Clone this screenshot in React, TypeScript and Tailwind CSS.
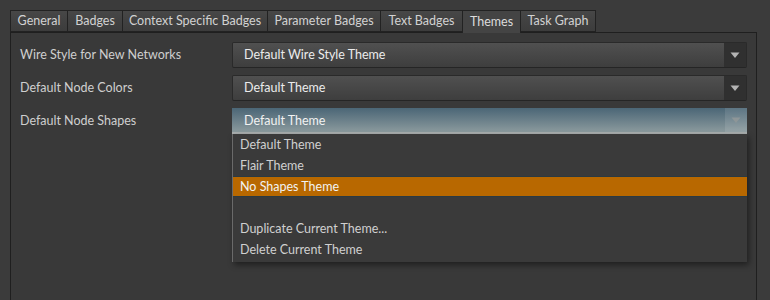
import React from 'react';

const tabs = [
  { label: 'General', w: 'w-[58px]' },
  { label: 'Badges', w: 'w-[56px]' },
  { label: 'Context Specific Badges', w: 'w-[146px]' },
  { label: 'Parameter Badges', w: 'w-[114px]' },
  { label: 'Text Badges', w: 'w-[83px]' },
  { label: 'Themes', w: 'w-[59px]', active: true },
  { label: 'Task Graph', w: 'w-[76px]' },
];

const Arrow: React.FC<{ dim?: boolean }> = ({ dim }) => (
  <svg width="10" height="7" viewBox="0 0 10 7">
    <path d="M0.5 0.5 L9.5 0.5 L5 6 Z" fill={dim ? '#8e9698' : '#b4b4b4'} />
  </svg>
);

const Combo: React.FC<{ value: string; open?: boolean }> = ({ value, open }) =>
  open ? (
    <div className="flex h-[26px] w-[515px] border-b-2 border-[#a9aeae] bg-gradient-to-b from-[#4b6676] to-[#8b9a9d]">
      <div className="flex-1 pl-[12px] leading-[25px] text-[#f2f2f2]">{value}</div>
      <div className="flex w-[22px] items-center justify-center bg-[#ffffff1a]">
        <Arrow dim />
      </div>
    </div>
  ) : (
    <div className="flex h-[26px] w-[515px] rounded-[2px] border border-[#2a2a2a] border-b-[#252525] bg-gradient-to-b from-[#505050] to-[#3e3e3e]">
      <div className="flex-1 pl-[11px] leading-[24px] text-[#ececec]">{value}</div>
      <div className="flex w-[22px] items-center justify-center bg-[#303030]">
        <Arrow />
      </div>
    </div>
  );

const rows = [
  { label: 'Wire Style for New Networks', value: 'Default Wire Style Theme' },
  { label: 'Default Node Colors', value: 'Default Theme' },
  { label: 'Default Node Shapes', value: 'Default Theme', open: true },
];

const menu = ['Default Theme', 'Flair Theme', 'No Shapes Theme', '', 'Duplicate Current Theme...', 'Delete Current Theme'];

export default function App() {
  return (
    <div
      className="relative h-[300px] w-[770px] overflow-hidden bg-[#3b3b3b] pl-[10px] pt-[10px] text-[12.5px]"
      style={{ fontFamily: 'Lato, "Noto Sans", sans-serif' }}
    >
      <div className="flex h-[22px]">
        {tabs.map((t) => (
          <div
            key={t.label}
            className={`${t.w} flex items-center justify-center border-l border-t border-r border-[#222] -mr-px ${
              t.active
                ? 'relative z-10 h-[23px] bg-[#444] text-[#dcdcdc]'
                : 'h-[22px] border-b bg-gradient-to-b from-[#474747] to-[#3c3c3c] text-[#d2d2d2]'
            }`}
          >
            {t.label}
          </div>
        ))}
      </div>
      <div className="h-[270px] w-[747px] border border-[#1f1f1f] bg-[#393939] pl-[9px] pt-[9px]">
        <div className="flex flex-col gap-[7px]">
          {rows.map((r) => (
            <div key={r.label} className="flex items-center">
              <div className="w-[212px] text-[#cfcfcf]">{r.label}</div>
              <Combo value={r.value} open={r.open} />
            </div>
          ))}
        </div>
      </div>

      <div className="absolute left-[232px] top-[134px] w-[515px] border-l border-[#6a6a6a] bg-[#3a3a3a] shadow-[2px_3px_6px_rgba(0,0,0,0.45)]">
        {menu.map((m, i) =>
          i === 2 ? (
            <div key={i} className="h-[21px] border-y border-[#2b3a42] bg-[#b86800] pl-[7px] leading-[20px] text-[#f2f2f2]">
              {m}
            </div>
          ) : (
            <div key={i} className="h-[21px] pl-[7px] leading-[22px] text-[#d0d0d0]">
              {m}
            </div>
          )
        )}
        <div className="h-[2px]" />
      </div>
    </div>
  );
}
